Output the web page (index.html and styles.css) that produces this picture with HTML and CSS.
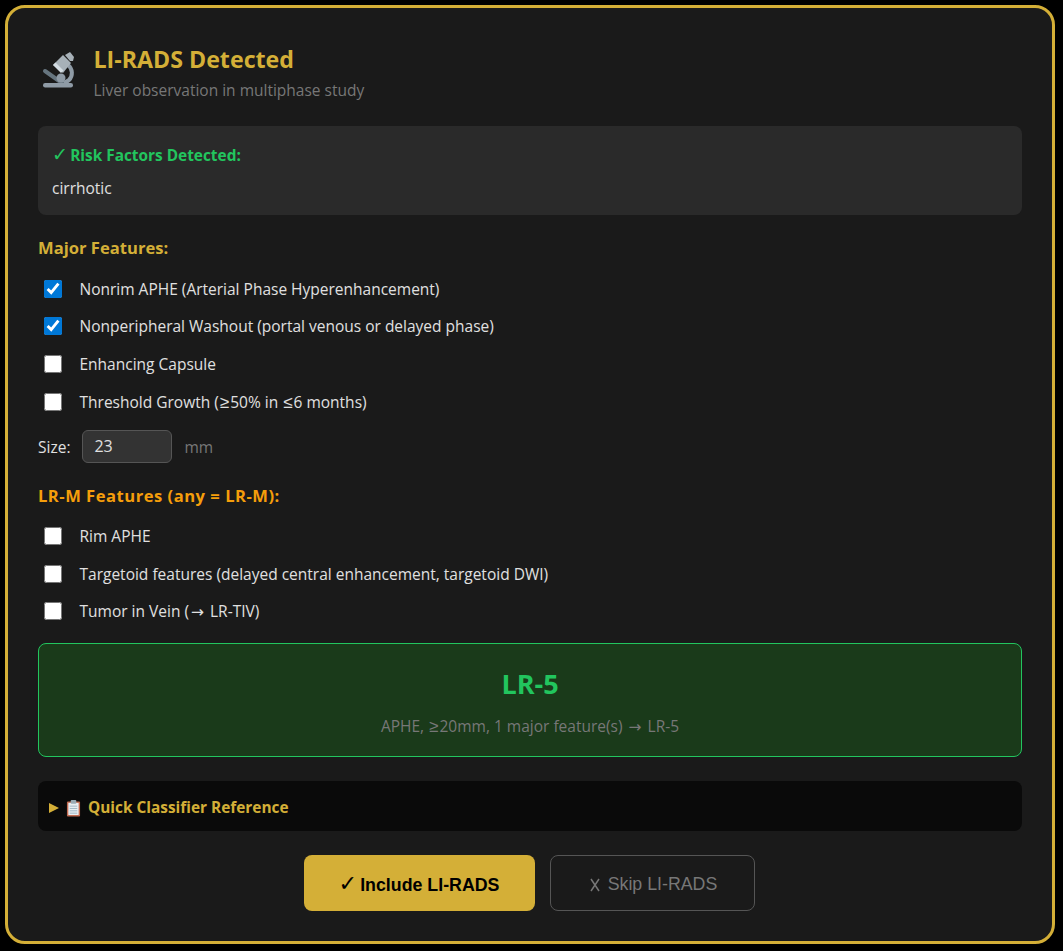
FILE: index.html
```html
<!DOCTYPE html>
<html lang="en">
<head>
    <meta charset="UTF-8">
    <meta name="viewport" content="width=device-width, initial-scale=1.0">
    <title>LI-RADS Detected</title>
    <link rel="stylesheet" href="styles.css">
</head>
<body>
    <div class="card">
        <div class="header">
            <svg class="header-icon" viewBox="0 0 33 36" aria-hidden="true">
                <path fill="none" stroke="#8f9ba6" stroke-width="4" d="M26 13c5 4 5 11 1 15-2 2-5 3-8 3"/>
                <path fill="none" stroke="#66757f" stroke-width="4" stroke-linecap="round" d="M3 19l17 12"/>
                <circle fill="#8f9ba6" cx="19" cy="26" r="4.500"/>
                <rect fill="#8f9ba6" x="1" y="31" width="30" height="4.500" rx="2.200"/>
                <path fill="#a7b1b8" d="M11 13l10-10 8 8-8 10z"/>
                <path fill="#d3dce2" d="M11 13l2.500-2.500 8 8L19 21z"/>
                <path fill="#a7b1b8" d="M23 3l5-3 4 5-1 4-3 0z"/>
            </svg>
            <div class="header-text">
                <h2>LI-RADS Detected</h2>
                <p>Liver observation in multiphase study</p>
            </div>
        </div>

        <div class="risk-box">
            <div class="risk-title"><span class="tick">✓</span> Risk Factors Detected:</div>
            <div class="risk-value">cirrhotic</div>
        </div>

        <h4 class="section-title">Major Features:</h4>
        <label class="check-row"><input type="checkbox" checked> Nonrim APHE (Arterial Phase Hyperenhancement)</label>
        <label class="check-row"><input type="checkbox" checked> Nonperipheral Washout (portal venous or delayed phase)</label>
        <label class="check-row"><input type="checkbox"> Enhancing Capsule</label>
        <label class="check-row"><input type="checkbox"> <span>Threshold Growth (<span class="sym">≥</span>50% in <span class="sym">≤</span>6 months)</span></label>

        <div class="size-row">
            <span class="size-label">Size:</span>
            <input class="size-input" type="text" value="23">
            <span class="size-unit">mm</span>
        </div>

        <h4 class="section-title lrm">LR-M Features (any = LR-M):</h4>
        <label class="check-row"><input type="checkbox"> Rim APHE</label>
        <label class="check-row"><input type="checkbox"> Targetoid features (delayed central enhancement, targetoid DWI)</label>
        <label class="check-row"><input type="checkbox"> <span>Tumor in Vein (<span class="arr">→</span> LR-TIV)</span></label>

        <div class="result-box">
            <div class="result-grade">LR-5</div>
            <div class="result-reason">APHE, <span class="sym">≥</span>20mm, 1 major feature(s) <span class="arr">→</span> LR-5</div>
        </div>

        <div class="reference">
            <span class="arrow"></span>
            <svg class="clip-icon" viewBox="0 0 16 18" aria-hidden="true">
                <rect x="1" y="2" width="14" height="16" rx="1" fill="#c1694f"/>
                <rect x="2.500" y="3.500" width="11" height="13" fill="#e8eef3"/>
                <rect x="5" y="0.500" width="6" height="4" rx="1" fill="#99aab5"/>
                <path stroke="#9db4c4" stroke-width="1" d="M4 7h8M4 9.500h8M4 12h8M4 14.500h8"/>
            </svg>
            <span>Quick Classifier Reference</span>
        </div>

        <div class="actions">
            <button class="btn btn-include"><span class="tick">✓</span> Include LI-RADS</button>
            <button class="btn btn-skip">
                <svg class="cross" viewBox="0 0 10 14" aria-hidden="true">
                    <path fill="none" stroke="#777" stroke-width="1.500" d="M1 1l8 12M9 1L1 13"/>
                </svg>
                Skip LI-RADS
            </button>
        </div>
    </div>
</body>
</html>
```
FILE: styles.css
```css
* {
    box-sizing: border-box;
}
body {
    margin: 0;
    background-color: #000;
    font-family: "Open Sans", "Noto Sans", sans-serif;
    font-size: 16px;
    color: #e0e0e0;
}
.card {
    width: 1050px;
    height: 939px;
    margin: 5px 0 0 5px;
    padding: 0 30px;
    background-color: #1a1a1a;
    border: 3px solid #d4af37;
    border-radius: 20px;
}
.header {
    display: flex;
    align-items: flex-start;
    gap: 18.500px;
    height: 118px;
    padding: 36px 0 0 4px;
}
.header-icon {
    width: 33px;
    height: 36px;
    margin-top: 8px;
}
.header-text h2 {
    margin: 0;
    font-size: 23.200px;
    line-height: 30px;
    font-weight: 700;
    color: #d4af37;
}
.header-text p {
    margin: 2px 0 0;
    font-size: 15.500px;
    line-height: 28px;
    color: #777;
}
.risk-box {
    height: 89px;
    padding: 17px 14px 0;
    background-color: #2a2a2a;
    border-radius: 8px;
}
.risk-title {
    font-size: 15.400px;
    line-height: 24px;
    font-weight: 700;
    color: #22c55e;
}
.tick {
    margin-right: -2px;
    font-family: "DejaVu Sans", sans-serif;
    font-size: 1.250em;
    font-weight: 400;
}
.risk-value {
    margin-top: 8px;
    font-size: 15.500px;
    line-height: 24px;
    color: #e0e0e0;
}
.section-title {
    margin: 20px 0 9px;
    font-size: 16.600px;
    line-height: 26px;
    font-weight: 700;
    color: #d4af37;
}
.section-title.lrm {
    margin: 19.400px 0 8.100px;
    letter-spacing: 0.500px;
    color: #f59e0b;
}
.check-row {
    display: flex;
    align-items: center;
    gap: 17.500px;
    height: 37.600px;
    padding-left: 6px;
    font-size: 15.500px;
    color: #e0e0e0;
}
.check-row input {
    width: 18px;
    height: 18px;
    margin: 0;
    accent-color: #0078d7;
}
.sym {
    margin: 0 1px;
    font-family: "Liberation Sans", Arial, sans-serif;
    font-size: 1.100em;
}
.arr {
    margin: 0 2px;
    font-family: "DejaVu Sans", sans-serif;
}
.size-row {
    display: flex;
    align-items: center;
    height: 34px;
    margin-top: 9.400px;
    font-size: 15.500px;
}
.size-unit {
    color: #777;
}
.size-input {
    width: 90px;
    height: 33px;
    margin: 0 12px;
    padding: 0 11px 2px;
    background-color: #333;
    border: 1px solid #555;
    border-radius: 6px;
    color: #e0e0e0;
    font: inherit;
    font-size: 16px;
}
.result-box {
    height: 114px;
    margin-top: 13.200px;
    padding-top: 22px;
    background-color: #1a3a1a;
    border: 1px solid #22c55e;
    border-radius: 8px;
    text-align: center;
}
.result-grade {
    font-size: 27px;
    line-height: 36px;
    font-weight: 700;
    color: #22c55e;
}
.result-reason {
    margin-top: 12px;
    font-size: 15.500px;
    line-height: 24px;
    color: #777;
}
.reference {
    display: flex;
    align-items: center;
    height: 50px;
    margin-top: 24px;
    padding: 3px 0 0 11px;
    background-color: #0a0a0a;
    border-radius: 8px;
    font-size: 15.400px;
    font-weight: 700;
    color: #d4af37;
}
.arrow {
    width: 0;
    height: 0;
    margin-right: 7px;
    border-left: 10px solid #d4af37;
    border-top: 5.500px solid transparent;
    border-bottom: 5.500px solid transparent;
}
.clip-icon {
    width: 15px;
    height: 18px;
    margin-right: 7px;
}
.actions {
    display: flex;
    justify-content: center;
    gap: 15px;
    margin-top: 24px;
    padding-right: 2px;
}
.btn {
    height: 56px;
    border-radius: 8px;
    font-family: "Liberation Sans", Arial, sans-serif;
    font-size: 17.800px;
}
.btn-include {
    width: 231px;
    padding-top: 1px;
    background-color: #d4af37;
    border: none;
    font-weight: 700;
    color: #000;
}
.btn-skip {
    width: 205px;
    padding: 3px 0 0 3px;
    background-color: transparent;
    border: 1px solid #555;
    color: #777;
}
.cross {
    width: 10px;
    height: 14px;
    margin-right: 3px;
    vertical-align: -2px;
}
```
